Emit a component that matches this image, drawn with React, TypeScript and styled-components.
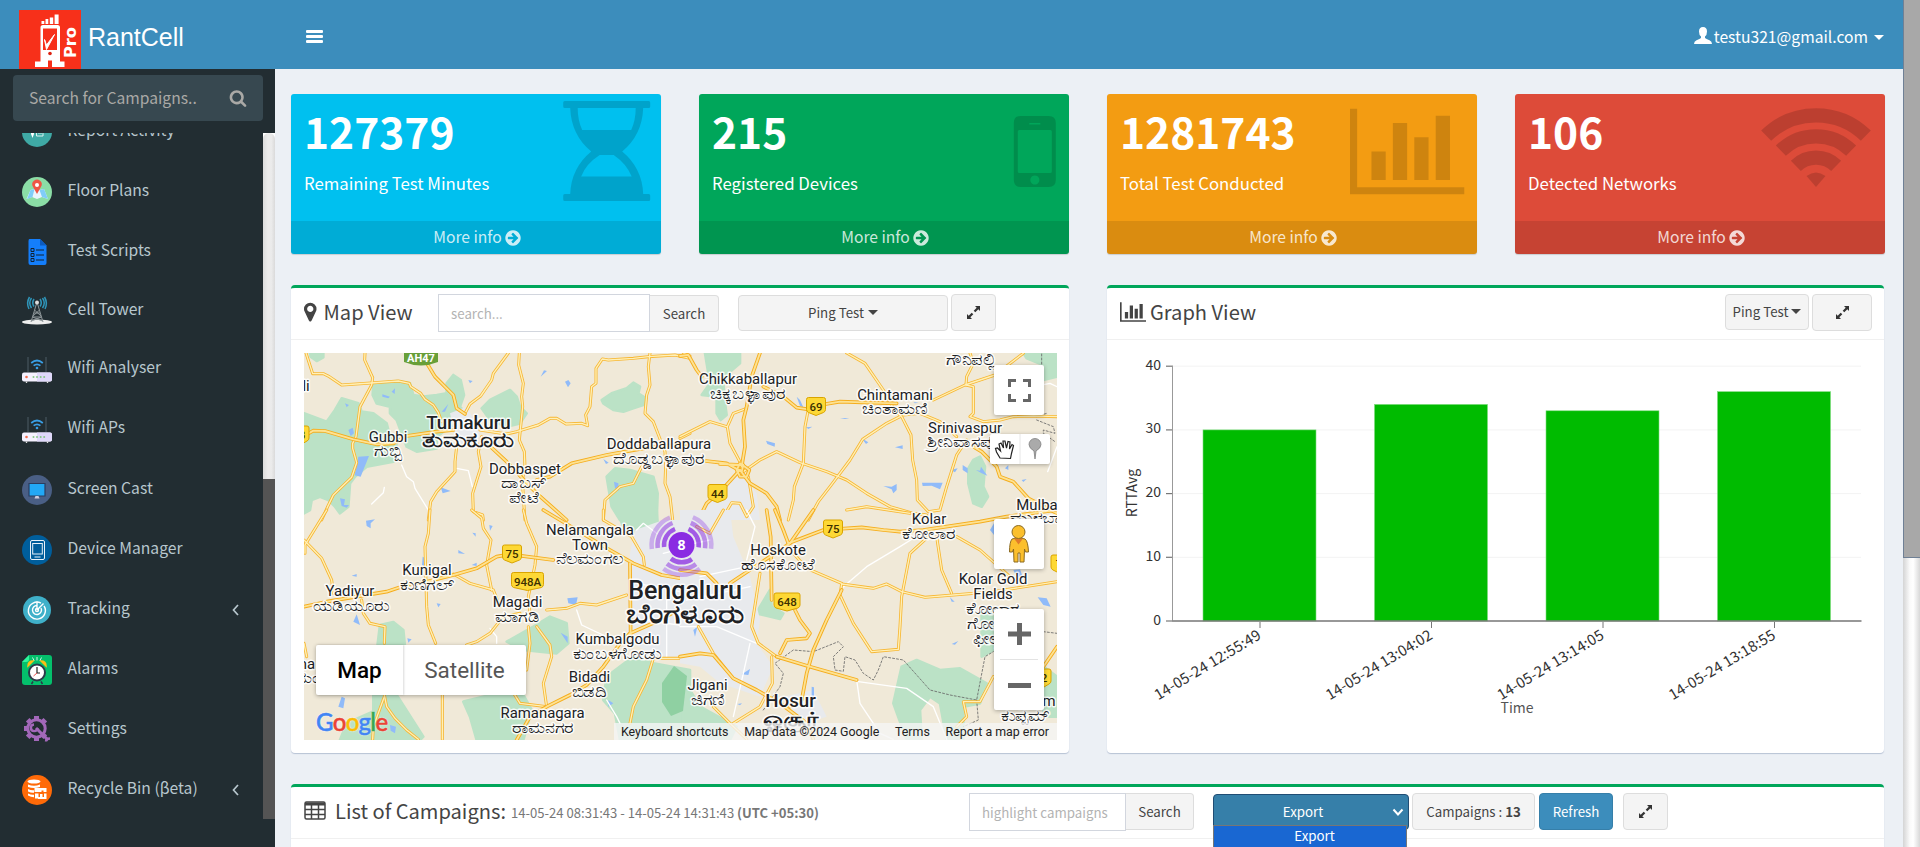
import React from "react";
import styled, { createGlobalStyle } from "styled-components";

const GlobalStyle = createGlobalStyle`
  * { box-sizing: border-box; }
  body {
    margin: 0;
    background: #ecf0f5;
    color: #333;
    font-family: "Noto Sans CJK SC", "Open Sans", sans-serif;
    font-size: 15.67px;
    line-height: 1.43;
    overflow: hidden;
  }
`;

const Screen = styled.div`
  display: flex;
  width: 1920px;
  height: 847px;
  overflow: hidden;
`;

const Page = styled.div`
  display: flex;
  flex-direction: column;
  width: 1903px;
`;

const PageScroll = styled.div`
  width: 17px;
  background: linear-gradient(90deg, #d4d4d4, #fafafa 40%, #fff 60%, #d8d8d8);
`;

const PageThumb = styled.div`
  height: 558px;
  background: #a8a8a8;
  border: 1px solid #6f8095;
  border-top: 0;
  border-right: 0;
`;

const TopBar = styled.header`
  display: flex;
  align-items: flex-start;
  height: 69px;
  background: #3c8dbc;
  color: #fff;
`;

const Brand = styled.div`
  display: flex;
  width: 306px;
  padding: 10px 0 0 19px;
  gap: 7px;
  font: 25px/55px "Liberation Sans", sans-serif;
`;

const Burger = styled.div`
  display: flex;
  flex-direction: column;
  gap: 2px;
  margin-top: 30px;
  width: 16.5px;
  i { height: 3px; border-radius: 1px; background: #fff; }
`;

const Account = styled.div`
  display: flex;
  align-items: center;
  margin: 25px 19px 0 auto;
  height: 24px;
  gap: 2px;
  svg { margin-bottom: 3px; }
`;

const Caret = styled.i<{ $m?: number }>`
  display: inline-block;
  width: 0;
  height: 0;
  margin-left: ${(p) => p.$m ?? 4}px;
  vertical-align: middle;
  border-top: 5px solid currentColor;
  border-left: 5px solid transparent;
  border-right: 5px solid transparent;
`;

const Body = styled.div`
  display: flex;
  height: 778px;
`;

const Sidebar = styled.aside`
  width: 275px;
  background: #222d32;
  color: #b8c7ce;
`;

const SideSearch = styled.div`
  display: flex;
  align-items: center;
  justify-content: space-between;
  width: 250px;
  height: 46px;
  margin: 6px 0 12px 13px;
  padding: 0 16px 0 16px;
  border-radius: 4px;
  background: #374850;
  color: #aaa9a6;
`;

const SideScroll = styled.div`
  display: flex;
  height: 686px;
  overflow: hidden;
`;

const Menu = styled.nav`
  width: 263px;
  overflow: hidden;
`;

const MenuInner = styled.div`
  margin-top: -32px;
`;

const MenuItem = styled.div<{ $h: number }>`
  display: flex;
  align-items: center;
  height: ${(p) => p.$h}px;
  padding: 0 24px 0 22px;
  svg { flex: none; margin-top: 2px; }
  span { flex: 1; margin: -2px 0 0 15.500px; }
`;

const SideTrack = styled.div`
  width: 12px;
  height: 686px;
  background: #fff;
`;

const SideRail = styled.div`
  height: 346px;
  border-radius: 7px 7px 0 0;
  background: linear-gradient(90deg, #dcdcdc, #ebebeb 40%, #ebebeb 70%, #dadada);
`;

const SideThumb = styled.div`
  height: 340px;
  background: #545454;
`;

const Content = styled.main`
  width: 1628px;
  padding: 25px 19px 0 16px;
`;

const Stats = styled.div`
  display: grid;
  grid-template-columns: repeat(4, 370px);
  gap: 38px;
`;

const StatCard = styled.section<{ $bg: string }>`
  position: relative;
  height: 160px;
  display: flex;
  flex-direction: column;
  border-radius: 3px;
  overflow: hidden;
  color: #fff;
  background: ${(p) => p.$bg};
  box-shadow: 0 1px 1px rgba(0, 0, 0, 0.15);
`;

const StatValue = styled.div`
  margin: 11px 0 0 13px;
  font-size: 42.5px;
  font-weight: 700;
  line-height: 52px;
`;

const StatLabel = styled.div`
  margin: 14px 0 0 13px;
  font-size: 16.8px;
  line-height: 24px;
`;

const StatArt = styled.svg`
  position: absolute;
  top: 0;
  left: 0;
  width: 370px;
  height: 127px;
  fill: rgba(0, 0, 0, 0.15);
`;

const MoreInfo = styled.div`
  display: flex;
  align-items: center;
  justify-content: center;
  gap: 2px;
  height: 33px;
  margin-top: auto;
  padding-left: 3px;
  background: rgba(0, 0, 0, 0.1);
  color: rgba(255, 255, 255, 0.8);
`;

const Panels = styled.div`
  display: grid;
  grid-template-columns: 778px 777px;
  gap: 38px;
  margin: 31px 0;
`;

const Box = styled.section<{ $h: number }>`
  height: ${(p) => p.$h}px;
  border-top: 3px solid #00a65a;
  border-radius: 4px;
  background: #fff;
  box-shadow: 0 1px 1px rgba(60, 90, 140, 0.3);
`;

const BoxHead = styled.div`
  display: flex;
  align-items: flex-start;
  height: 52px;
  padding: 6px 12px 0 13px;
  border-bottom: 1px solid #f0f0f0;
  font-size: 13.3px;
`;

const Title = styled.h3<{ $w: number; $gap: number }>`
  display: flex;
  align-items: center;
  gap: ${(p) => p.$gap}px;
  width: ${(p) => p.$w}px;
  height: 36px;
  margin: 0;
  font-size: 20.1px;
  font-weight: 400;
  color: #444;
  white-space: nowrap;
  svg { margin-bottom: 1px; }
  small { font-size: 13.08px; color: #777; margin: 4px 0 0 -4px; }
`;

const Field = styled.div<{ $w: number }>`
  width: ${(p) => p.$w}px;
  height: 38px;
  padding-left: 12px;
  border: 1px solid #d2d6de;
  color: #b3b3b3;
  line-height: 37px;
  white-space: nowrap;
`;

const Btn = styled.div<{ $w: number; $h?: number; $ml?: number; $tone?: "blue" | "dark"; $flat?: boolean; $mt?: number }>`
  display: flex;
  align-items: center;
  justify-content: center;
  width: ${(p) => p.$w}px;
  height: ${(p) => p.$h ?? 37}px;
  margin-left: ${(p) => p.$ml ?? 0}px;
  margin-top: ${(p) => p.$mt ?? 0}px;
  padding-bottom: 1px;
  border: 1px solid ${(p) => (p.$tone === "blue" ? "#367fa9" : p.$tone === "dark" ? "#204d74" : "#ddd")};
  border-left-width: ${(p) => (p.$flat ? 0 : 1)}px;
  border-radius: ${(p) => (p.$flat ? "0 4px 4px 0" : "4px")};
  background: ${(p) => (p.$tone === "blue" ? "#3c8dbc" : p.$tone === "dark" ? "#367fa9" : "#f4f4f4")};
  color: ${(p) => (p.$tone ? "#fff" : "#444")};
  white-space: pre;
`;

const ExportWrap = styled.div`
  position: relative;
  margin: 1px 3px 0 19px;
  span { margin-right: 16px; }
  svg { position: absolute; right: 5px; top: 14px; }
`;

const ExportMenu = styled.div`
  position: absolute;
  top: 31px;
  left: 0;
  width: 194px;
  height: 24px;
  padding-left: 9px;
  border: 1px solid #767676;
  background: #1967d2;
  color: #fff;
  text-align: center;
  line-height: 20px;
`;

const MapFrame = styled.div`
  position: relative;
  width: 753px;
  height: 387px;
  margin: 13px 0 0 13px;
  overflow: hidden;
  font-family: Roboto, sans-serif;
`;

const MapTile = styled.div<{ $x: number; $y: number; $w: number; $h: number }>`
  position: absolute;
  left: ${(p) => p.$x}px;
  top: ${(p) => p.$y}px;
  width: ${(p) => p.$w}px;
  height: ${(p) => p.$h}px;
  display: flex;
  border-radius: 2px;
  background: #fff;
  box-shadow: 0 1px 4px rgba(0, 0, 0, 0.3);
`;

const MapType = styled.div<{ $w: number; $on?: boolean }>`
  width: ${(p) => p.$w}px;
  text-align: center;
  font-size: 22.5px;
  line-height: 50px;
  font-weight: ${(p) => (p.$on ? 500 : 400)};
  color: ${(p) => (p.$on ? "#000" : "#565656")};
  box-shadow: ${(p) => (p.$on ? "1px 0 2px rgba(0,0,0,.15)" : "none")};
`;

const GoogleMark = styled.div`
  position: absolute;
  left: 12px;
  top: 352px;
  font: 500 24px/34px Lato, sans-serif;
  letter-spacing: -0.7px;
  text-shadow: 0 0 2px #fff;
`;

const Tint = styled.span<{ $c: string }>`
  color: ${(p) => p.$c};
  -webkit-text-stroke: 0.5px ${(p) => p.$c};
`;

const Credits = styled.div`
  position: absolute;
  right: 0;
  bottom: 0;
  display: flex;
  justify-content: space-between;
  width: 443px;
  height: 17px;
  padding: 0 8px 0 7px;
  background: rgba(245, 245, 245, 0.8);
  color: #222;
  font-size: 12.4px;
  line-height: 18px;
  white-space: nowrap;
`;

const FA = ({ d, size }: { d: string; size: number }) => (
  <svg width={size} height={size} viewBox="0 0 1792 1792" fill="currentColor"><path d={d} /></svg>
);
const SEARCH = "M1216 832q0-185-131.5-316.5t-316.5-131.5-316.5 131.5-131.5 316.5 131.5 316.5 316.5 131.5 316.5-131.5 131.5-316.5zm512 832q0 52-38 90t-90 38q-54 0-90-38l-343-342q-179 124-399 124-143 0-273.5-55.5t-225-150-150-225-55.5-273.5 55.5-273.5 150-225 225-150 273.5-55.5 273.5 55.5 225 150 150 225 55.5 273.5q0 220-124 399l343 343q37 37 37 90z";
const ARROW = "M1413 896q0-27-18-45l-91-91-362-362q-18-18-45-18t-45 18l-91 91q-18 18-18 45t18 45l189 189h-502q-26 0-45 19t-19 45v128q0 26 19 45t45 19h502l-189 189q-19 19-19 45t19 45l91 91q18 18 45 18t45-18l362-362 91-91q18-18 18-45zm251 0q0 209-103 385.5t-279.5 279.5-385.5 103-385.5-103-279.5-279.5-103-385.5 103-385.5 279.5-279.5 385.5-103 385.5 103 279.5 279.5 103 385.5z";

const Expand = () => (
  <svg width="15" height="15" viewBox="0 0 15 15" fill="#333">
    <path d="M9 1h5v5l-1.700-1.700-3 3-1.600-1.600 3-3zM6 14H1V9l1.700 1.700 3-3 1.600 1.600-3 3z" />
  </svg>
);

const PinIcon = () => (
  <svg width="12.500" height="20" viewBox="384 128 1024 1536" fill="#444">
    <path d="M1152 640q0-106-75-181t-181-75-181 75-75 181 75 181 181 75 181-75 75-181zm256 0q0 109-33 179l-364 774q-16 33-47.5 52t-67.5 19-67.5-19-46.5-52l-365-774q-33-70-33-179 0-212 150-362t362-150 362 150 150 362z" />
  </svg>
);

const BarsPath = "M640 896v512H384V896zm384-512v1024H768V384zm1024 1152v128H0V128h128v1408zm-640-896v768h-256V640zm384-384v1152h-256V256z";

const Logo = () => (
  <svg width="62" height="59" viewBox="0 0 62 59">
    <path fill="#f7301a" d="M0 0h62v59H0z" />
    <g fill="#fff">
      <path d="M22.500 11h2.800v3h-2.800zM26.500 9h2.800v5h-2.800zM30.800 7.500h3.400V14h-3.400zM35.600 4.500h4V14h-4z" />
      <path d="M24 15h14.500q2.500 0 2.500 2.500V51.500h4.500V57H33v-6.500h-4V57H16v-5.500h5.500V17.500Q21.500 15 24 15z" />
      <path fill="#f7301a" d="M24 18.500h14V40H24z" />
      <path d="M25.500 29.500l2 5.500 8-10.500-8 15z" stroke="#fff" />
      <circle cx="31" cy="43.500" r="1.800" fill="#d21" />
    </g>
    <text transform="translate(57 48) rotate(-90)" fill="#fff" fontFamily="DejaVu Sans" fontWeight="700" fontSize="15.500" textLength="31" lengthAdjust="spacingAndGlyphs">Pro</text>
  </svg>
);

const Router = () => (
  <svg width="30" height="30" viewBox="0 0 30 30">
    <path d="M6 2v15M24 2v15" stroke="#37444b" strokeWidth="2" />
    <g fill="none" stroke="#3a9fe6" strokeWidth="1.700"><path d="M9.200 8q5.800-5 11.600 0" /><path d="M11.600 10.700q3.400-2.800 6.800 0" /></g>
    <circle cx="15" cy="13" r="1.300" fill="#3a9fe6" />
    <rect y="17.500" width="30" height="9" rx="2" fill="#f5f1ff" />
    <path d="M15 17.500h13q2 0 2 2v5q0 2-2 2H15z" fill="#e0d9fb" />
    <path d="M3.500 26.500h2l-.5 1.500h-1zM24.500 26.500h2l-.5 1.500h-1z" fill="#ddd" />
    <circle cx="4.500" cy="22" r="1.300" fill="#f0704f" />
    <g fill="#8ac78a"><circle cx="11.500" cy="22" r="1" /><circle cx="15" cy="22" r="1" /><circle cx="18.700" cy="22" r="1" /><circle cx="22.200" cy="22" r="1" /></g>
  </svg>
);

const Icons: Record<string, React.ReactNode> = {
  report: <svg width="30" height="30"><circle cx="15" cy="15" r="15" fill="#3fa9a5" /><path d="M9 5h3v12l-1.500 4L9 17z" fill="#fff" /><path d="M14.500 8h6.500v11h-6.500zM16 13h4M16 16h4" fill="none" stroke="#d9f1ef" /></svg>,
  floor: <svg width="30" height="30"><circle cx="15" cy="15" r="15" fill="#8bdda6" /><path d="M8.500 13l4-1 5 1 4.500-1 4 10-6-2-5 2-5-2-5.500 2z" fill="#e9f5fd" /><path d="M8.500 13l4-1-2 8-5.500 2zM17.500 13l4.500-1 4 10-6-2z" fill="#80cdf8" /><path d="M15 17l-4-7.200a4.700 4.700 0 1 1 8 0z" fill="#ee5545" /><circle cx="15" cy="8" r="2" fill="#fff" /></svg>,
  script: <svg width="30" height="30"><path d="M7.500 2H18l6.500 6.500V26q0 2-2 2h-14q-2 0-2-2V4q0-2 1-2z" fill="#147efb" /><path d="M18 2v6.500h6.500z" fill="#0c5bc0" /><path d="M14 13h8M14 18h8M14 23h8M9 11.500h3v3H9zM9 16.500h3v3H9zM9 21.500h3v3H9z" stroke="#123" strokeWidth="1" fill="none" /></svg>,
  tower: <svg width="30" height="30"><ellipse cx="15" cy="26" rx="15" ry="2.500" fill="#eee" /><path d="M15 6l-6 20M15 6l6 20M12.500 14l6.500 6M17.500 14l-6.500 6M12 17h6M10.500 21h9l-10 4M10.500 21l10 4" stroke="#8e9699" fill="none" /><circle cx="15" cy="6.500" r="2" fill="#ddd" /><g fill="none" stroke="#2f95b9" strokeWidth="1.500"><path d="M12 3q-2.500 4 0 7.500M9.500 2q-3.500 5 0 10M7.500 1Q4 7 7 13M18 3q2.500 4 0 7.500M20.500 2q3.500 5 0 10M22.500 1Q26 7 23 13" /></g></svg>,
  router: <Router />,
  cast: <svg width="30" height="30"><circle cx="15" cy="15" r="15" fill="#4a5f85" /><path d="M7 8.500h16V21H7z" fill="#22a8f5" stroke="#2a3d60" strokeWidth="1.200" /><path d="M13.500 21h3l1 2.500h-5z" fill="#ccd" /></svg>,
  device: <svg width="30" height="30"><circle cx="15" cy="15" r="15" fill="#005e9c" /><g fill="none" stroke="#e8f2fa"><rect x="8.500" y="5.500" width="14" height="19" rx="1.500" /><rect x="10.700" y="8.500" width="9.600" height="10.500" /><path d="M12.500 22h6" /></g></svg>,
  tracking: <svg width="30" height="30"><circle cx="15" cy="15" r="14" fill="#3fb0c9" /><g fill="none" stroke="#fff" strokeWidth="1.400"><path d="M19 8.200A8.500 8.500 0 1 0 22 11" /><path d="M15 10.500a4.500 4.500 0 1 0 4 2.500M15 15l6.500-6.500M15 6.500V15" /><circle cx="15" cy="15" r="1.500" /></g></svg>,
  alarm: <svg width="30" height="30"><path d="M7 0h20q3 0 3 3v24q0 3-3 3H3q-3 0-3-3V7z" fill="#04c06c" /><path d="M7 0v4q0 3-3 3H0z" fill="#2ef59c" /><path d="M11 26.500l-1.500 2.500M19 26.500l1.500 2.500" stroke="#2b3a4a" strokeWidth="1.500" /><path d="M6 11q0-5 5-5zM24 11q0-5-5-5z" fill="#fdbe15" stroke="#fdbe15" strokeWidth="1.500" /><path d="M15 2v3.500M10.500 2.500L12 5.500M19.500 2.500L18 5.500" stroke="#fff" strokeWidth=".8" /><circle cx="15" cy="17.500" r="8" fill="#fff" stroke="#2b3a4a" strokeWidth="2" /><path d="M15 12v6h3" stroke="#222" fill="none" strokeWidth="1.200" /><path d="M15 18l-3.500 3" stroke="#e55" /></svg>,
  settings: <svg width="30" height="30" fill="none" stroke="#a368ba"><circle cx="14.500" cy="13.500" r="8.700" strokeWidth="3" /><g strokeWidth="5">{[0, 45, 135, 180, 225, 270, 315].map((a) => <path key={a} d="M14.500 4.500V1" transform={`rotate(${a} 14.500 13.500)`} />)}</g><path d="M14 13l12 12" strokeWidth="3" /><path d="M12 9.500a3.300 3.300 0 1 0 3.500 3.500M24 26.500q0-3 4-3" strokeWidth="2.400" /></svg>,
  bin: <svg width="30" height="30"><circle cx="15" cy="15" r="15" fill="#ff6a08" /><g fill="#fff"><ellipse cx="12" cy="6.500" rx="6.500" ry="2" /><path d="M6 9.500q6 2.500 12 0V12q-6 2-12 0zM6 14q3 1.500 6 1.200v2.500Q9 18 6 16.500zM6 18.500q3 1.500 6 1.200v2.500Q9 22 6 20.500zM12.500 13h12v4h-3v-1.500h-2V17h-7zM13 18.500h3.500v5H13zM18 19h2.500v5H18zM22 18.500h2.500V24H16v-2h6z" /></g></svg>,
};

const menu: { icon: string; label: string; h: number; more?: boolean }[] = [
  { icon: "report", label: "Report Activity", h: 60 },
  { icon: "floor", label: "Floor Plans", h: 60 },
  { icon: "script", label: "Test Scripts", h: 60 },
  { icon: "tower", label: "Cell Tower", h: 58 },
  { icon: "router", label: "Wifi Analyser", h: 59 },
  { icon: "router", label: "Wifi APs", h: 61 },
  { icon: "cast", label: "Screen Cast", h: 60 },
  { icon: "device", label: "Device Manager", h: 60 },
  { icon: "tracking", label: "Tracking", h: 60, more: true },
  { icon: "alarm", label: "Alarms", h: 60 },
  { icon: "settings", label: "Settings", h: 60 },
  { icon: "bin", label: "Recycle Bin (βeta)", h: 60, more: true },
];

const arc = (r: number) => {
  const k = r * 0.7;
  return `M${301 - k} ${92.500 - r * 0.714}A${r} ${r} 0 0 1 ${301 + k} ${92.500 - r * 0.714}`;
};

const stats = [
  {
    value: "127379", label: "Remaining Test Minutes", bg: "#00c0ef",
    art: <path transform="translate(.7 0)" fillRule="evenodd" d="M273 7h84q1.500 0 1.500 1.500v4q0 1.500-1.500 1.500h-5.500q-1 27-21 43.500 20 16.500 21 42.500h5.500q1.500 0 1.500 1.500v4q0 1.500-1.500 1.500h-84q-1.500 0-1.500-1.500v-4q0-1.500 1.500-1.500h5.500q1-26 21-42.500-20-16.500-21-43.500H273q-1.500 0-1.500-1.500v-4Q271.500 7 273 7zM286 14q0 12 4.500 22h49q4.500-10 4.500-22zM308 61q-14 9-18.500 21.500h50.500Q335 70 322 61z" />,
  },
  {
    value: "215", label: "Registered Devices", bg: "#00a65a",
    art: <path transform="translate(-.7 0)" fillRule="evenodd" d="M322.500 22h28q7 0 7 7v57q0 7-7 7h-28q-7 0-7-7V29q0-7 7-7zM321 36q-1.500 0-1.500 1.500v40q0 1.500 1.500 1.500h31q1.500 0 1.500-1.500v-40q0-1.500-1.500-1.500zM331 29v1.500h11V29zM336.500 81.500a4.500 4.500 0 1 0 .1 0z" />,
  },
  {
    value: "1281743", label: "Total Test Conducted", bg: "#f39c12",
    art: <path transform="translate(243 7.500) scale(.0558)" d={BarsPath} />,
  },
  {
    value: "106", label: "Detected Networks", bg: "#dd4b39",
    art: (
      <g fill="none" stroke="rgba(0,0,0,.15)" strokeWidth="14.300">
        <path d={arc(71.200)} /><path d={arc(50.200)} /><path d={arc(28.800)} />
        <path d="M291.500 82q9.500-7 19 0L301 93z" fill="rgba(0,0,0,.15)" stroke="none" />
      </g>
    ),
  },
];

const Y = "#f7b733";
const quads = [
  {
    t: "translate(-14 -73) scale(.33333)",
    green: ["M60 219H100L100 232L80 243L62 230Z", "M42 400L70 410L110 425L135 390L155 355L205 370L215 395L250 400L290 430L300 470L320 490L310 545L230 560L195 590L180 610L175 680L150 700L135 680L115 660L90 650L65 660L60 690L42 700Z", "M250 315L320 303L360 310L370 345L400 350L440 345L470 340L470 310L490 285L512 300L522 345L510 380L540 420L480 440L440 470L440 505L380 515L350 500L320 420L300 400L300 380L260 370L248 345Z", "M575 385L600 360L660 330L680 350L690 380L710 400L690 430L650 440L600 420Z", "M935 360L965 340L1010 325L1030 308L1050 320L1045 340L1068 355L1060 375L1030 385L1000 395L970 390L940 370Z", "M950 590L975 565L1020 570L1090 590L1103 640L1100 720H990L965 680Z"],
    urban: ["M480 400L530 380L570 450L560 500L500 490Z"],
    blue: ["M205 530L237 528L220 570L212 590L194 586Z", "M150 655L165 658L162 675L177 675L170 683L155 678Z", "M277 343L300 350L295 355L277 350ZM305 335L315 325L314 342ZM455 395L475 372L465 395ZM535 300L548 303L540 310ZM752 290L762 271L771 273ZM825 305L835 300L842 310L834 322ZM175 450L188 443L192 460L182 468ZM452 622L482 633L458 640ZM940 537L956 548L948 552ZM972 605L985 610L986 632L975 625ZM1040 690L1048 688L1042 720H1036ZM165 370L177 375L170 382Z"],
    white: ["M335 555L350 590L370 605L375 625L415 690", "M500 565L535 572L547 620", "M245 672L280 638L283 622"],
    road: ["M48 219L68 281L100 281L118 290L155 315L243 309L325 303L358 310L362 320L392 340L405 358L430 375L445 398L455 425", "M225 219L224 240L248 293L245 315L210 380L198 470L188 490V505L200 548L185 592L130 645L113 680L95 720", "M655 219L610 280L605 300L572 348L540 372L525 400", "M688 219L686 255L700 310L695 350L698 380L692 440L688 480L703 515L705 560L697 600L700 650L705 720", "M570 450L650 462L680 455L745 435L780 415H800L828 432L875 430L893 437L887 405L900 380L905 320L918 310V265L937 237L955 240L1030 235L1075 230L1155 225L1200 235", "M1080 219L1075 260L1080 315L1070 345L1065 400L1090 425L1115 490L1125 515L1127 560L1125 610L1140 650L1148 720", "M500 500L495 545V575L440 635L422 665L415 720", "M575 470L565 515L573 560L548 640L550 695L578 705L580 720", "M1065 540L1045 580L1030 610L990 620L945 660L940 720", "M1180 219L1200 228M1170 475L1200 460"],
    hwy: ["M412 252L435 290L490 345L500 385L525 402", "M42 468L70 452L105 453L190 478L260 493L310 490L350 468L440 455L490 450", "M580 480L650 545L740 640L830 720", "M740 600L780 590L845 550L950 525L1060 505L1200 490"],
    dash: [],
  },
  {
    t: "translate(376 -73) scale(.33333)",
    green: ["M75 219H180V250L150 275L130 310L135 370L140 405L122 420L110 400V350L65 345L90 310L80 250Z", "M1030 219H1131V290L1090 300V255L1040 235Z", "M865 565L880 540L900 530L915 560L910 620L924 650L905 680L880 670L865 610Z"],
    urban: ["M100 620L180 580L230 640L240 720H60Z"],
    blue: ["M350 350L360 360L370 382L360 378ZM258 482L285 490L284 500L262 492ZM480 414L508 414L495 417ZM378 442L397 440L385 447ZM545 475L565 487L558 492ZM645 502L668 496L668 507ZM610 618L635 620L650 612V630L640 640L635 628ZM726 608H788L780 628L755 617L728 618ZM812 570L833 565L825 577ZM848 555L863 565V580L848 570ZM888 570L900 572L903 560L922 587L905 580ZM1025 600L1040 597L1030 606ZM975 565L985 555V570ZM700 366L716 368L705 370Z"],
    white: ["M1103 575L1131 500", "M1060 320L1110 310L1131 320"],
    road: ["M500 219L555 250L610 330L640 385L665 410L693 465L698 540L710 600L712 660L745 695L780 690L800 620L830 525L860 480", "M870 219L880 250L860 290L858 315L880 320V400L870 410L910 425L960 420L1000 410L1060 408L1131 410", "M385 388L375 440L370 550L343 620L340 660L325 720", "M0 470L90 425L140 440", "M200 385L160 400L142 440L150 490L185 555", "M190 575L240 540L290 515L360 548L440 575L500 600L560 640L630 680L700 700L740 705", "M660 410L620 430L548 478L510 540L450 620L415 665L385 720", "M670 405L720 400L780 425L830 470", "M205 590L220 680L200 710L180 670L155 668L125 720", "M760 360L855 315L900 300L945 285L1030 220"],
    hwy: ["M0 228L25 225L50 270L65 290", "M240 219L215 290L200 380L190 420L195 500L185 560", "M250 320L310 350L350 383L385 388L420 375L480 365L570 368L650 370", "M78 543L140 550L185 575L190 555L120 552", "M180 550L208 570L200 590L180 590L170 570Z", "M180 570L210 610L260 640L290 680L300 720", "M180 570L130 625L80 670L55 720", "M880 500L905 515L950 560L960 590L1000 605L1045 655L1131 700"],
    dash: ["M1085 222V270M1070 420L1120 440L1125 460L1090 450V460L1125 485M1070 410L1100 400"],
  },
  {
    t: "translate(-14 157) scale(.33333)",
    green: ["M270 345L310 336L340 360L345 410H262Z", "M650 395L730 350L780 320L830 340L835 400L800 430L700 420Z", "M520 575L600 555H700L725 600L700 690H560L540 620Z", "M250 555H320L400 680L390 690H250Z", "M170 640L260 600L310 690H150Z", "M950 500L1030 440L1090 460L1200 480V690H990L975 610L940 570Z", "M980 0H1100L1103 40L1060 80L1000 50Z"],
    urban: ["M1035 60L1120 30H1200V440L1100 440L1010 390L1020 130Z"],
    blue: ["M228 32L255 28L242 40V55L230 48ZM598 45L608 48L600 62ZM547 68L557 70V80ZM505 120L525 132L505 130ZM545 165L560 158V168ZM185 197L200 192V200ZM398 140L407 145L402 168L396 165ZM440 280L452 282L445 292ZM832 265L863 262L858 285L835 280ZM87 322L105 328ZM190 335L200 313L210 345ZM352 385L365 388L355 398ZM812 368L833 380V400ZM145 590L155 560L165 565L160 595ZM300 645L318 650L315 670L302 662ZM955 570L970 580L955 590Z"],
    white: ["M600 355L620 380V400", "M785 0M860 300L875 345L960 385L1010 395", "M950 570L980 620L990 640", "M1040 60L1060 40L1100 70M1120 130L1200 110M1040 220L1200 250M1060 330L1200 350M1130 260V440"],
    road: ["M110 0L45 105V130", "M42 90L95 145L125 210L130 250", "M420 0L415 70L405 110L410 290L415 345L437 400", "M545 0L575 25L580 55L603 90L590 165L605 240", "M700 0L710 40L740 110L735 165L715 260L720 310", "M490 192L540 220L610 240L630 290", "M740 350L780 405L785 440L760 520L770 590", "M690 310L640 320L600 370L560 395L530 405", "M770 300L830 295L870 280L920 285L1010 255", "M715 350L720 400L710 480", "M215 270L220 310L240 340L285 350L283 400", "M283 555L290 590L315 625L350 660L385 688", "M283 560L250 650L248 688", "M457 555V688", "M1200 445H1090L1070 510L1030 590L1020 640", "M940 0V30L1025 80L1060 140L1063 165", "M665 540L690 580L770 590", "M42 400L50 440"],
    hwy: ["M42 290L110 275L200 260L290 245L350 225L410 215L490 195L560 175L620 140L660 133L790 150", "M680 690L720 620L770 590L840 555L890 525L940 470L990 400L1020 370L1110 330L1200 280", "M760 0L860 60L960 120L1030 160L1115 195L1200 210", "M1020 160L1022 380"],
    dash: [],
  },
  {
    t: "translate(376 157) scale(.33333)",
    green: ["M665 470L710 450L780 480L840 475L920 520L900 580L850 590L850 690H800L780 580L750 560L720 600L725 690H680L640 580Z", "M240 290L270 240L275 290L310 310L300 327L230 310Z", "M905 310L940 300V420L905 440Z", "M0 490L60 590L170 650L150 690H0Z", "M1090 470L1131 500V620H1090Z"],
    urban: ["M0 0L150 0L160 80L210 200L240 330L230 400L280 470L240 560L120 520L60 470L0 460Z", "M310 560L400 540L440 620L340 650Z"],
    blue: ["M1073 262L1100 265L1112 290L1090 285ZM810 262L824 275L815 275ZM815 402L835 393L825 404ZM395 530L402 532V560H395ZM185 493L210 477L205 495ZM172 582L186 580L180 586ZM1000 180L1020 178L1030 205L1010 200ZM40 360L52 350L45 380ZM930 60L942 40V75Z"],
    white: ["M200 0L225 50L200 150", "M530 510L540 580L600 670L640 688", "M535 515L680 535L760 590L800 688", "M485 235L560 170L660 110L740 60", "M0 350L110 350L230 400", "M0 110L90 90M60 200L200 170M20 270L210 230", "M210 400L190 490L160 620"],
    road: ["M130 0L90 70L50 50", "M485 222L580 235L620 222L665 245L735 262L820 255L940 245L1131 215", "M485 222L480 255L520 340L575 425L655 418L660 350L665 260L690 130L745 80", "M770 80L785 180L815 250", "M830 80L900 120L990 200", "M55 350L100 430L160 505", "M275 440L277 520L240 590L160 640", "M100 590L150 640L200 688", "M940 500L900 575H850L860 620L830 650", "M340 130L380 175L485 220", "M240 190L215 350L235 400L290 440", "M500 0L560 -10L690 10"],
    hwy: ["M260 0L272 80L275 270", "M400 0L330 100L240 160L150 220", "M285 0L310 60L325 100L430 60L545 52L610 60L660 65L730 60L900 35L980 20L1131 0", "M290 440L390 470L530 510", "M485 240L440 330L400 420L380 490L365 570L330 590", "M0 440L60 430L100 435L160 505L230 540L300 580L380 640L400 688", "M345 300L360 330L390 370L380 385L320 390L300 430", "M1131 410L1090 470", "M0 180L80 190L110 220"],
    dash: ["M250 600L300 530L310 490L285 460L340 420L400 425L475 395L490 410L460 440L465 480L490 484L495 440L525 450L550 490L580 510L595 480L610 440L670 450L750 540L810 555L890 570L915 440L940 425M890 570L895 630L850 650M1090 365L1131 370"],
  },
];

type L = [string, number, number, number?, number?];
const labels: L[] = [
  ["li", 2, 38], ["Gubbi", 84, 88.500], ["ಗುಬ್ಬಿ", 84, 103], ["Tumakuru", 164.500, 75.500, 18.700, 500], ["ತುಮಕೂರು", 164, 94, 20.500, 700],
  ["Dobbaspet", 221, 120.500], ["ದಾಬಸ್", 220, 135], ["ಪೇಟೆ", 220, 150], ["Doddaballapura", 355, 96], ["ದೊಡ್ಡಬಳ್ಳಾಪುರ", 355, 110.500],
  ["Chikkaballapur", 444, 31], ["ಚಿಕ್ಕಬಳ್ಳಾಪುರ", 444, 45.500], ["Chintamani", 591, 46.500], ["ಚಿಂತಾಮಣಿ", 591, 61], ["ಗೌನಿಪಲ್ಲಿ", 667, 12],
  ["Srinivaspur", 661, 79.500], ["ಶ್ರೀನಿವಾಸಪುರ", 662, 94], ["Mulbagal", 743, 156.500], ["ಮುಳಬಾಗಿಲು", 745, 170], ["Kolar", 625, 171], ["ಕೋಲಾರ", 625, 185.500],
  ["Nelamangala", 286, 181.500], ["Town", 286, 196.500], ["ನೆಲಮಂಗಲ", 286, 211], ["Kunigal", 123, 222], ["ಕುಣಿಗಲ್", 123, 237],
  ["Yadiyur", 46, 243], ["ಯಡಿಯೂರು", 47, 258], ["Magadi", 213.500, 254], ["ಮಾಗಡಿ", 213, 269], ["Kumbalgodu", 313.500, 291], ["ಕುಂಬಳಗೋಡು", 313, 306],
  ["Bidadi", 285.500, 329], ["ಬಿಡದಿ", 285, 344], ["Ramanagara", 238.500, 365], ["ರಾಮನಗರ", 239, 380], ["na", 3, 316], ["ಮಂ", 4, 330],
  ["Bengaluru", 381, 246, 25, 500], ["ಬೆಂಗಳೂರು", 381, 270, 26.500, 700], ["Hoskote", 474, 202], ["ಹೊಸಕೋಟೆ", 474, 217],
  ["Kolar Gold", 689, 231], ["Fields", 689, 246], ["ಕೋಲಾರ", 689, 261], ["ಗೋಲ್ಡ್", 687, 276], ["ಫೀಲ್ಡ್", 687, 291],
  ["Jigani", 403.500, 337], ["ಜಿಗಣಿ", 404, 352], ["Hosur", 486.500, 354, 18.700, 500], ["ஓசூர்", 487, 373, 20, 700], ["Kuppam", 724, 352.500], ["ಕುಪ್ಪಮ್", 722, 368],
];

const shields: [string, number, number, number][] = [
  ["69", 512, 53.500, 19], ["44", 413.500, 140.500, 19], ["75", 208, 201, 19], ["75", 529, 176, 19], ["948A", 223.500, 228.500, 32], ["648", 483, 249, 26], ["8", -2, 82, 14], ["2", 740, 325, 14], ["7", 755, 211, 16],
];

const isLatin = (t: string) => t.charCodeAt(0) < 128;

const MapArt = () => (
  <svg width="753" height="387" viewBox="0 0 753 387">
    <path fill="#f0e9d8" d="M0 0h753v387H0z" />
    {quads.map((q, i) => (
      <g key={i} transform={q.t} fill="none" strokeLinejoin="round" strokeLinecap="round">
        <g fill="#bbe2c6" stroke="#bbe2c6" strokeWidth="8">{q.green.map((d) => <path key={d} d={d} />)}</g>
        <g fill="#e8eaed">{q.urban.map((d) => <path key={d} d={d} />)}</g>
        <g fill="#90bbf9">{q.blue.map((d) => <path key={d} d={d} />)}</g>
        <g stroke="#fff" strokeWidth="4">{q.white.map((d) => <path key={d} d={d} />)}</g>
        <g stroke="#666" strokeWidth="2.500" strokeDasharray="6 6">{q.dash.map((d) => <path key={d} d={d} />)}</g>
        <g stroke={Y} strokeWidth="9">{q.road.map((d) => <path key={d} d={d} />)}</g>
        <g stroke="#fff0b8" strokeWidth="4">{q.road.map((d) => <path key={d} d={d} />)}</g>
        <g stroke="#f5ad1d" strokeWidth="11">{q.hwy.map((d) => <path key={d} d={d} />)}</g>
        <g stroke="#fde293" strokeWidth="5.500">{q.hwy.map((d) => <path key={d} d={d} />)}</g>
      </g>
    ))}
    <path fill="#8fd0a2" d="M358 330l12-17 13 10-4 35-12 5-9-14z" />
    <path d="M100 0h34v9q-17 7-34 0z" fill="#689f38" />
    <text x="117" y="8.500" textAnchor="middle" fill="#fff" fontSize="11" fontWeight="700">AH47</text>
    {shields.map(([t, x, y, w], i) => (
      <g key={i}>
        <path d={`M${x - w / 2 + 2} ${y - 9}h${w - 4}q2 0 2 2v10q0 2-2 3l-${w / 2 - 2} 3-${w / 2 - 2}-3q-2-1-2-3v-10q0-2 2-2z`} fill="#fdd835" stroke="#d9a400" />
        <text x={x} y={y + 4} textAnchor="middle" fontSize="11.500" fontWeight="500" fill="#3c3000">{t}</text>
      </g>
    ))}
    <g transform="translate(377.500 192)" fill="none" stroke="#8a2be2">
      {[0, 120, 240].map((a) => (
        <g key={a} transform={`rotate(${a})`} strokeWidth="4.500">
          <path d="M-6.500 -16A17.500 17.500 0 0 0 -17.400 2" strokeOpacity=".75" />
          <path d="M-9 -22A24 24 0 0 0 -23.800 3" strokeOpacity=".5" />
          <path d="M-11.500 -27.500A30 30 0 0 0 -29.700 4" strokeOpacity=".32" />
        </g>
      ))}
      <circle r="13" fill="#8a2be2" stroke="none" />
      <text y="5" textAnchor="middle" fill="#fff" stroke="none" fontSize="14" fontWeight="700" fontFamily="Open Sans">8</text>
    </g>
    <g fill="#202124" stroke="#fff" strokeOpacity=".85" strokeWidth="3" strokeLinejoin="round" paintOrder="stroke" textAnchor="middle">
      {labels.map(([t, x, y, s, w], i) => {
        const stretch = isLatin(t) ? 1 : w ? 1.19 : 1.12;
        const size = s ?? (isLatin(t) ? 14.900 : 16);
        return <text key={i} transform={`translate(${x} ${y}) scale(${stretch} 1)`} fontSize={size} fontWeight={w ?? 400}>{t}</text>;
      })}
    </g>
  </svg>
);

const MapControls = () => (
  <>
    <MapTile $x={690} $y={12} $w={50} $h={50}>
      <svg width="50" height="50" fill="none" stroke="#666" strokeWidth="3"><path d="M15.500 22v-6.500H22M29 15.500h6.500V22M35.500 29v6.500H29M22 35.500h-6.500V29" /></svg>
    </MapTile>
    <MapTile $x={686} $y={81} $w={60} $h={30}>
      <svg width="60" height="30">
        <path d="M30 0v30" stroke="#e6e6e6" />
        <path d="M10 24l-3.500-6-1-3.500 2-.500 3 3-1.500-7 2-1 2.500 5-.5-7h2l1.500 7 1.500-6.500 2 .5-.5 7 2.500-4.500 1.500 1-2 8-1 5z" fill="#fff" stroke="#222" strokeWidth="1.200" />
        <path d="M45 25l-1-8q-5-3-5-6.500a6 6 0 0 1 12 0q0 3.500-5 6.500z" fill="#aaa" stroke="#808080" strokeWidth=".8" />
      </svg>
    </MapTile>
    <MapTile $x={690} $y={166} $w={50} $h={50}>
      <svg width="50" height="50">
        <path d="M18 20q6-3 13 0 3 2 3.500 13h-3l-1-3-.5 13h-4V34h-2v9h-4l-.5-13-1 3h-3q0-10 2.500-13z" fill="#fbbf2d" stroke="#8b6a22" strokeWidth="1" />
        <path d="M20 19.500h9l-4.500 6z" fill="#e07b2a" />
        <circle cx="24.500" cy="13" r="6.500" fill="#fbbf2d" stroke="#8b6a22" />
      </svg>
    </MapTile>
    <MapTile $x={690} $y={256} $w={50} $h={101}>
      <svg width="50" height="101"><path d="M14 25h23M25.500 14v22M14 76.500h23" stroke="#666" strokeWidth="5" /><path d="M6 50.500h38" stroke="#e3e3e3" /></svg>
    </MapTile>
    <MapTile $x={12} $y={292} $w={210} $h={50}>
      <MapType $w={87} $on>Map</MapType>
      <MapType $w={123}>Satellite</MapType>
    </MapTile>
    <GoogleMark>
      {[["G", "#4285f4"], ["o", "#ea4335"], ["o", "#fbbc05"], ["g", "#4285f4"], ["l", "#34a853"], ["e", "#ea4335"]].map(([c, col], i) => <Tint key={i} $c={col}>{c}</Tint>)}
    </GoogleMark>
    <Credits><span>Keyboard shortcuts</span><span>Map data ©2024 Google</span><span>Terms</span><span>Report a map error</span></Credits>
  </>
);

const bars = [
  { x: 1203, v: 30, t: "14-05-24 12:55:49" },
  { x: 1374.500, v: 34, t: "14-05-24 13:04:02" },
  { x: 1546, v: 33, t: "14-05-24 13:14:05" },
  { x: 1717.500, v: 36, t: "14-05-24 13:18:55" },
];

const Chart = () => (
  <svg width="777" height="410" viewBox="1107 340 777 410" fontSize="13.400" fill="#333">
    {[0, 10, 20, 30, 40].map((v) => {
      const y = 621 - v * 6.370;
      return (
        <g key={v}>
          <path d={`M1173 ${y}H1861`} stroke="#f3f3f3" />
          <path d={`M1166 ${y}h7`} stroke="#777" strokeWidth="1.200" />
          <text x="1161" y={y + 3.500} fontSize="14" textAnchor="end">{v}</text>
        </g>
      );
    })}
    {bars.map((b) => (
      <g key={b.t}>
        <rect x={b.x} y={621 - b.v * 6.370} width="113" height={b.v * 6.370} fill="#00bb00" stroke="#7ddc7d" strokeWidth=".6" />
        <path d={`M${b.x + 57} 622v6`} stroke="#777" />
        <text transform={`translate(${b.x + 59} 638) rotate(-31)`} fontSize="14.900" textAnchor="end">{b.t}</text>
      </g>
    ))}
    <path d="M1172.500 366V621" stroke="#999" />
    <path d="M1172.500 621H1861.500" stroke="#777" strokeWidth="1.300" />
    <text transform="translate(1137 493) rotate(-90)" fontSize="14" textAnchor="middle">RTTAvg</text>
    <text x="1517" y="713" fontSize="14" textAnchor="middle" fill="#555">Time</text>
  </svg>
);

export default function App() {
  return (
    <Screen>
      <GlobalStyle />
      <Page>
        <TopBar>
          <Brand><Logo /><span>RantCell</span></Brand>
          <Burger><i /><i /><i /></Burger>
          <Account>
            <svg width="18" height="18" viewBox="0 0 18 18" fill="#fff"><path d="M9 0q4 0 4 4.500 0 3.500-2 5v1.500q1 1 4.500 2.300Q18 14.500 18 17H0q0-2.500 2.500-3.700Q6 12 7 11V9.500q-2-1.500-2-5Q5 0 9 0z" /></svg>
            <span>testu321@gmail.com</span>
            <Caret />
          </Account>
        </TopBar>
        <Body>
          <Sidebar>
            <SideSearch><span>Search for Campaigns..</span><FA d={SEARCH} size={18} /></SideSearch>
            <SideScroll>
              <Menu>
                <MenuInner>
                  {menu.map((m) => (
                    <MenuItem key={m.label} $h={m.h}>
                      {Icons[m.icon]}
                      <span>{m.label}</span>
                      {m.more && <svg width="7" height="12" fill="none" stroke="#b8c7ce" strokeWidth="1.700"><path d="M6 1L1.500 6 6 11" /></svg>}
                    </MenuItem>
                  ))}
                </MenuInner>
              </Menu>
              <SideTrack><SideRail /><SideThumb /></SideTrack>
            </SideScroll>
          </Sidebar>
          <Content>
            <Stats>
              {stats.map((s) => (
                <StatCard key={s.label} $bg={s.bg}>
                  <StatArt viewBox="0 0 370 127">{s.art}</StatArt>
                  <StatValue>{s.value}</StatValue>
                  <StatLabel>{s.label}</StatLabel>
                  <MoreInfo>More info <FA d={ARROW} size={18} /></MoreInfo>
                </StatCard>
              ))}
            </Stats>
            <Panels>
              <Box $h={468}>
                <BoxHead>
                  <Title $w={134} $gap={7}><PinIcon />Map View</Title>
                  <Field $w={212}>search...</Field>
                  <Btn $w={69} $mt={1} $flat>Search</Btn>
                  <Btn $w={210} $ml={19} $h={36} $mt={1}>Ping Test<Caret /></Btn>
                  <Btn $w={45} $ml={3}><Expand /></Btn>
                </BoxHead>
                <MapFrame><MapArt /><MapControls /></MapFrame>
              </Box>
              <Box $h={468}>
                <BoxHead>
                  <Title $w={605} $gap={4}>
                    <svg width="26" height="20" viewBox="0 128 2048 1536" fill="#444"><path d={BarsPath} /></svg>Graph View
                  </Title>
                  <Btn $w={84} $h={36}>Ping Test<Caret $m={3} /></Btn>
                  <Btn $w={60} $ml={3}><Expand /></Btn>
                </BoxHead>
                <Chart />
              </Box>
            </Panels>
            <Box $h={90}>
              <BoxHead>
                <Title $w={665} $gap={9}>
                  <svg width="22" height="19" fill="none" stroke="#444" strokeWidth="1.500"><rect x="1" y="1" width="20" height="17" rx="1.500" /><path d="M1 3h20" strokeWidth="3" /><path d="M1 8.500h20M1 13.500h20M7.500 2v16M14.500 2v16" /></svg>
                  List of Campaigns: <small>14-05-24 08:31:43 - 14-05-24 14:31:43 <b>(UTC +05:30)</b></small>
                </Title>
                <Field $w={157}>highlight campaigns</Field>
                <Btn $w={68} $flat>Search</Btn>
                <ExportWrap>
                  <Btn $w={196} $tone="dark" $h={36}><span>Export</span></Btn>
                  <svg width="12" height="9" fill="none" stroke="#fff" strokeWidth="2"><path d="M1.500 1.500L6 6.500l4.500-5" /></svg>
                  <ExportMenu>Export</ExportMenu>
                </ExportWrap>
                <Btn $w={123}>Campaigns : <b>13</b></Btn>
                <Btn $w={74} $ml={4} $tone="blue">Refresh</Btn>
                <Btn $w={45} $ml={10}><Expand /></Btn>
              </BoxHead>
            </Box>
          </Content>
        </Body>
      </Page>
      <PageScroll><PageThumb /></PageScroll>
    </Screen>
  );
}
